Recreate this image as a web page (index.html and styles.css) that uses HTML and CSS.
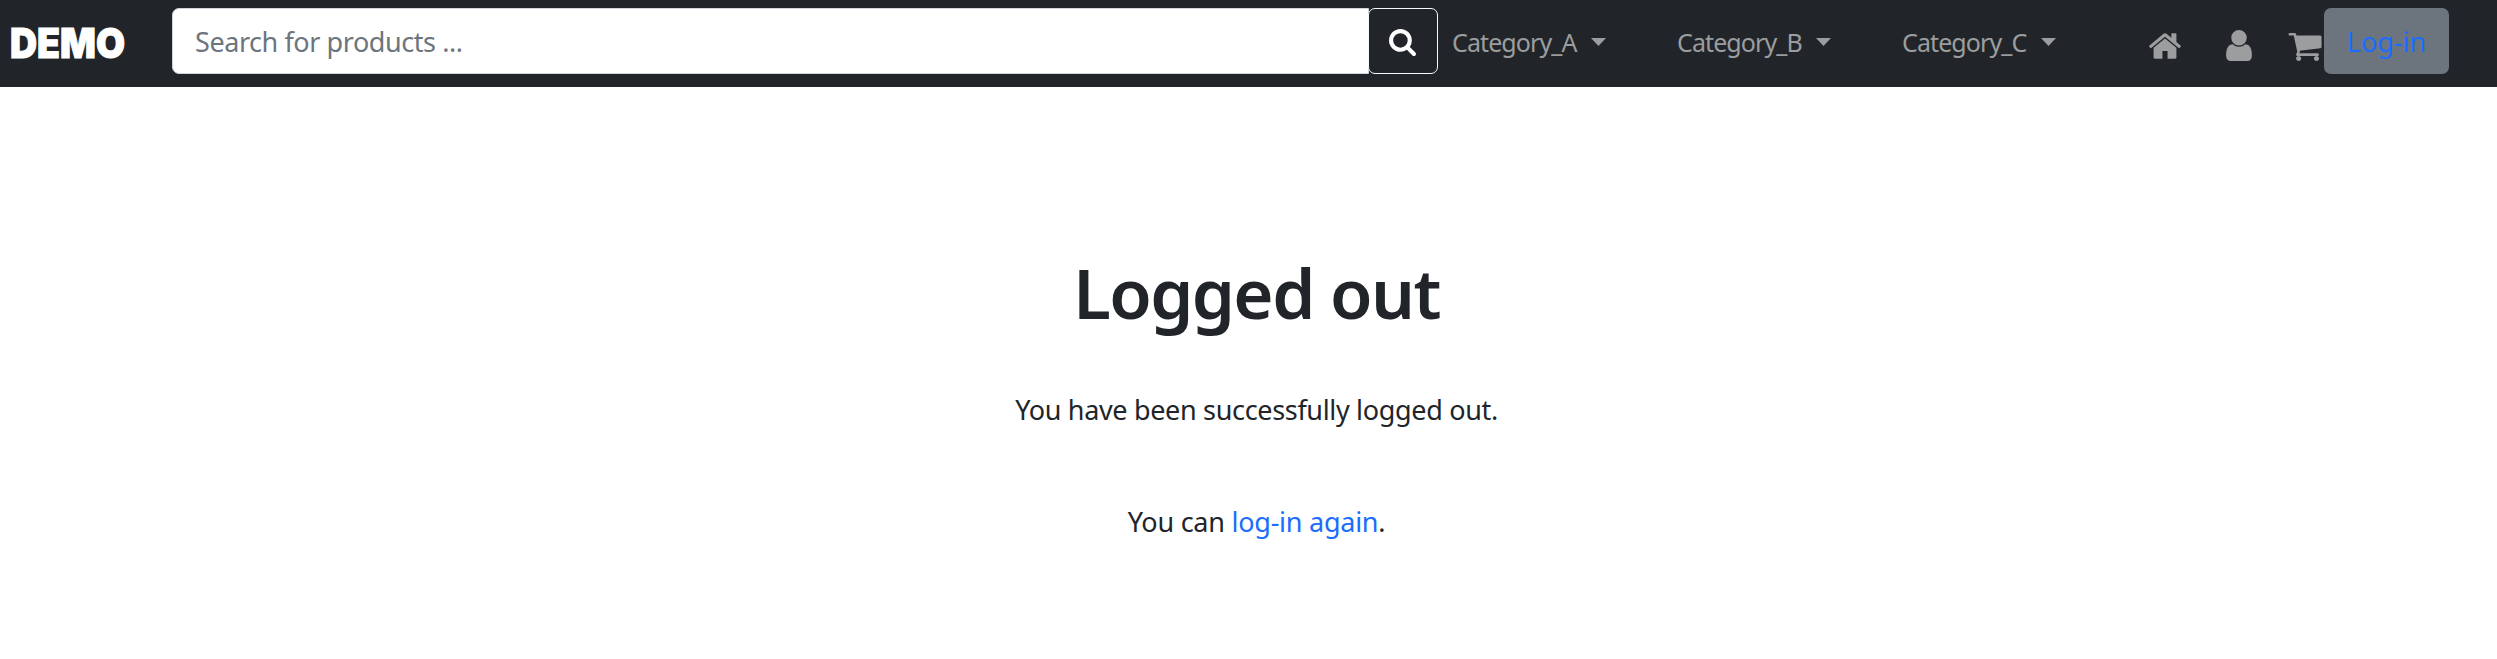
FILE: index.html
```html
<!DOCTYPE html>
<html lang="en">
<head>
<meta charset="utf-8">
<title>Logged out</title>
<link rel="stylesheet" href="styles.css">
</head>
<body>
<nav class="navbar">
  <a class="brand" href="#">DEMO</a>
  <form class="search">
    <input class="search-input" type="text" placeholder="Search for products ...">
    <button class="search-button" type="button" aria-label="Search">
      <svg class="icon-search" viewBox="64 128 1664 1664"><path d="M1216 832q0-185-131.500-316.500t-316.500-131.500-316.500 131.500-131.500 316.500 131.500 316.500 316.500 131.500 316.500-131.500 131.500-316.500zm512 832q0 52-38 90t-90 38q-54 0-90-38l-343-342q-179 124-399 124-143 0-273.500-55.500t-225-150-150-225-55.500-273.500 55.500-273.500 150-225 225-150 273.500-55.500 273.500 55.500 225 150 150 225 55.500 273.500q0 220-124 399l343 343q37 37 37 90z"/></svg>
    </button>
  </form>
  <div class="categories">
    <a class="category" href="#"><span class="label">Category_A</span><span class="caret"></span></a>
    <a class="category" href="#"><span class="label">Category_B</span><span class="caret"></span></a>
    <a class="category" href="#"><span class="label">Category_C</span><span class="caret"></span></a>
  </div>
  <div class="shortcuts">
    <svg class="icon-home" viewBox="89 253 1614 1283"><path d="M1472 992v480q0 26-19 45t-45 19h-384v-384h-256v384h-384q-26 0-45-19t-19-45v-480q0-1 .5-3t.5-3l575-474 575 474q1 2 1 6zm223-69l-62 74q-8 9-21 11h-3q-13 0-21-7l-692-577-692 577q-12 8-24 7-13-2-21-11l-62-74q-8-10-7-23.500t11-21.500l719-599q32-26 76-26t76 26l244 204v-195q0-14 9-23t23-9h192q14 0 23 9t9 23v408l219 182q10 8 11 21.500t-7 23.500z"/></svg>
    <svg class="icon-user" viewBox="256 128 1280 1536"><path d="M1536 1399q0 109-62.500 187t-150.500 78h-854q-88 0-150.500-78t-62.500-187q0-85 8.500-160.500t31.500-152 58.500-131 94-89 134.500-34.500q131 128 313 128t313-128q76 0 134.500 34.500t94 89 58.500 131 31.500 152 8.500 160.500zm-256-887q0 159-112.500 271.500t-271.500 112.500-271.500-112.500-112.500-271.500 112.500-271.500 271.500-112.500 271.500 112.500 112.500 271.500z"/></svg>
    <svg class="icon-cart" viewBox="64 256 1664 1408"><path d="M704 1536q0 52-38 90t-90 38-90-38-38-90 38-90 90-38 90 38 38 90zm896 0q0 52-38 90t-90 38-90-38-38-90 38-90 90-38 90 38 38 90zm128-1088v512q0 24-16.500 42.500t-40.500 21.500l-1044 122q13 60 13 70 0 16-24 64h920q26 0 45 19t19 45-19 45-45 19h-1024q-26 0-45-19t-19-45q0-11 8-31.500t16-36 21.500-40 15.500-29.500l-177-823h-204q-26 0-45-19t-19-45 19-45 45-19h256q16 0 28.500 6.500t19.500 15.500 13 24.500 8 26 5.500 29.500 4.500 26h1201q26 0 45 19t19 45z"/></svg>
  </div>
  <a class="login" href="#">Log-in</a>
</nav>
<main class="content">
  <h1 class="title">Logged out</h1>
  <p class="message">You have been successfully logged out.</p>
  <p class="again">You can <a class="link" href="#">log-in again</a>.</p>
</main>
</body>
</html>
```

FILE: styles.css
```css
* { box-sizing: border-box; }

body {
  margin: 0;
  background: #fff;
  color: #212529;
  font-family: "Noto Sans", "Open Sans", sans-serif;
  font-size: 27px;
  letter-spacing: -0.33px;
}

a { text-decoration: none; }

.navbar {
  display: flex;
  align-items: flex-start;
  height: 87px;
  padding: 8px 48px 0 10px;
  background: #212529;
  color: #9b9d9f;
  line-height: 67px;
}

.brand {
  width: 162px;
  flex: none;
  color: #fff;
  font-family: Inter, sans-serif;
  font-size: 41px;
  font-weight: 900;
  letter-spacing: 0;
  line-height: 71px;
  transform: scaleX(0.915);
  transform-origin: 0 0;
  -webkit-text-stroke: 1px #fff;
}

.search {
  display: flex;
  width: 1266px;
  flex: none;
}

.search-input {
  width: 1197px;
  height: 66px;
  padding: 1px 22px 0;
  border: 1px solid #ced4da;
  border-radius: 7px 0 0 7px;
  background: #fff;
  color: #212529;
  font: inherit;
  letter-spacing: -0.43px;
}

.search-input::placeholder { color: #6c757d; opacity: 1; }

.search-button {
  display: flex;
  align-items: center;
  justify-content: center;
  width: 70px;
  height: 66px;
  margin-left: -1px;
  padding: 0 1px 0 0;
  border: 1px solid #f8f9fa;
  border-radius: 7px;
  background: #212529;
}

.icon-search { width: 27px; height: 27px; margin-top: 3px; fill: #fff; }

.categories { display: flex; padding-left: 14px; }

.category {
  display: flex;
  width: 225px;
  color: #9b9d9f;
  font-size: 25px;
  letter-spacing: -0.9px;
  line-height: 69px;
}

.label { width: 139px; }

.caret {
  width: 15px;
  height: 8px;
  margin-top: 30px;
  background: #9b9d9f;
  clip-path: polygon(0 0, 100% 0, 50% 100%);
}

.shortcuts {
  display: flex;
  width: 197px;
  padding: 22px 0 0 22px;
  fill: #9b9d9f;
}

.icon-home { width: 32px; height: 26px; margin-top: 3px; }
.icon-user { width: 26px; height: 31px; margin-left: 45px; }
.icon-cart { width: 34px; height: 28px; margin: 3px 0 0 36px; }

.login {
  width: 125px;
  height: 66px;
  flex: none;
  border-radius: 7px;
  background: #6c757d;
  color: #1a6dfd;
  letter-spacing: 0;
  line-height: 68px;
  text-align: center;
}

.content {
  padding: 155px 0 0 16px;
  text-align: center;
}

.title {
  margin: 0;
  font-size: 69px;
  font-weight: 600;
  letter-spacing: -1.6px;
  line-height: 100px;
}

.message, .again { margin: 0; line-height: 40px; }
.message { margin-top: 48px; }
.again { margin-top: 72px; letter-spacing: -0.25px; }
.link { color: #1a6dfd; }
```
